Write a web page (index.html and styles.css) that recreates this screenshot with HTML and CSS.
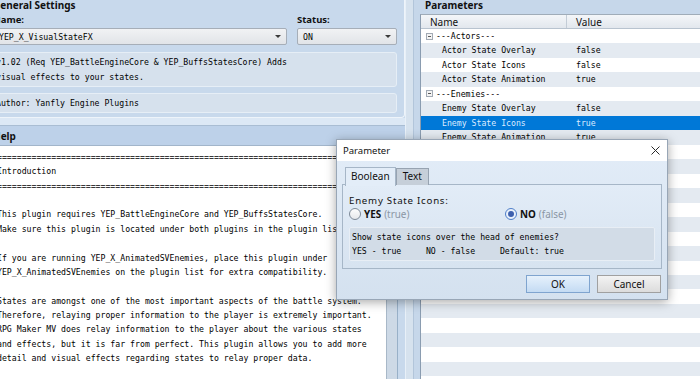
FILE: index.html
```html
<!DOCTYPE html>
<html lang="en">
<head>
    <meta charset="UTF-8">
    <meta name="viewport" content="width=device-width, initial-scale=1.0">
    <title>Plugin Manager</title>
    <link rel="stylesheet" href="styles.css">
</head>
<body>
    <div class="app">
        <div class="left">
            <section class="general">
                <h2 class="group-title">General Settings</h2>
                <div class="field-row">
                    <div class="field name-field">
                        <label>Name:</label>
                        <div class="select"><span>YEP_X_VisualStateFX</span><i class="arrow"></i></div>
                    </div>
                    <div class="field status-field">
                        <label>Status:</label>
                        <div class="select"><span>ON</span><i class="arrow"></i></div>
                    </div>
                </div>
                <div class="info-box desc">v1.02 (Req YEP_BattleEngineCore &amp; YEP_BuffsStatesCore) Adds<br>visual effects to your states.</div>
                <div class="info-box author">Author: Yanfly Engine Plugins</div>
            </section>
            <div class="hsplit"></div>
            <section class="help">
                <h2 class="help-title">Help</h2>
                <div class="help-body">
<pre class="help-text">================================================================================
Introduction
================================================================================

This plugin requires YEP_BattleEngineCore and YEP_BuffsStatesCore.
Make sure this plugin is located under both plugins in the plugin list.

If you are running YEP_X_AnimatedSVEnemies, place this plugin under
YEP_X_AnimatedSVEnemies on the plugin list for extra compatibility.

States are amongst one of the most important aspects of the battle system.
Therefore, relaying proper information to the player is extremely important.
RPG Maker MV does relay information to the player about the various states
and effects, but it is far from perfect. This plugin allows you to add more
detail and visual effects regarding states to relay proper data.</pre>
                    <div class="scroll-track"></div>
                </div>
            </section>
        </div>

        <div class="vsplit"></div>

        <div class="right">
            <h2 class="group-title params-title">Parameters</h2>
            <div class="param-table">
                <div class="param-head">
                    <div class="col-name">Name</div>
                    <div class="col-value">Value</div>
                </div>
                <div class="param-row">
                    <div class="col-name group"><i class="collapse"></i>---Actors---</div>
                    <div class="col-value"></div>
                </div>
                <div class="param-row alt">
                    <div class="col-name child">Actor State Overlay</div>
                    <div class="col-value">false</div>
                </div>
                <div class="param-row">
                    <div class="col-name child">Actor State Icons</div>
                    <div class="col-value">false</div>
                </div>
                <div class="param-row alt">
                    <div class="col-name child">Actor State Animation</div>
                    <div class="col-value">true</div>
                </div>
                <div class="param-row">
                    <div class="col-name group"><i class="collapse"></i>---Enemies---</div>
                    <div class="col-value"></div>
                </div>
                <div class="param-row alt">
                    <div class="col-name child">Enemy State Overlay</div>
                    <div class="col-value">false</div>
                </div>
                <div class="param-row selected">
                    <div class="col-name child">Enemy State Icons</div>
                    <div class="col-value">true</div>
                </div>
                <div class="param-row alt">
                    <div class="col-name child">Enemy State Animation</div>
                    <div class="col-value">true</div>
                </div>
                <div class="param-fill"></div>
            </div>
        </div>
    </div>

    <!-- dialogo de edicao do parametro -->
    <div class="dialog">
        <div class="dialog-title">
            <span>Parameter</span>
            <svg class="close" width="9" height="9" viewBox="0 0 9 9"><path d="M0.5 0.5L8.5 8.5M8.5 0.5L0.5 8.5" stroke="#2a2a2a" stroke-width="1"/></svg>
        </div>
        <div class="dialog-body">
            <div class="tabs">
                <div class="tab active">Boolean</div>
                <div class="tab">Text</div>
            </div>
            <div class="tab-panel">
                <div class="param-label">Enemy State Icons:</div>
                <div class="radios">
                    <div class="radio"><i class="dot"></i><b>YES</b> <span class="hint">(true)</span></div>
                    <div class="radio"><i class="dot checked"></i><b>NO</b> <span class="hint">(false)</span></div>
                </div>
                <pre class="param-desc">Show state icons over the head of enemies?
YES - true     NO - false     Default: true</pre>
            </div>
            <div class="buttons">
                <div class="btn ok">OK</div>
                <div class="btn">Cancel</div>
            </div>
        </div>
    </div>
</body>
</html>
```

FILE: styles.css
```css
body {
    margin: 0;
    width: 700px;
    height: 379px;
    overflow: hidden;
    position: relative;
    font-family: "Noto Sans", "DejaVu Sans", sans-serif;
    font-size: 9.5px;
    color: #111;
    background-color: #c8d9ec;
}
.app {
    display: flex;
    height: 379px;
    margin-left: -10px;
}
.left {
    width: 415px;
    flex-shrink: 0;
    display: flex;
    flex-direction: column;
}
.group-title {
    margin: 0;
    font-size: 10px;
    font-weight: bold;
    line-height: 10px;
    height: 9px;
}
.general {
    padding: 0 7px 4px 3px;
    border-right: 1px solid #eef4fa;
    border-bottom: 1px solid #eef4fa;
    border-bottom-right-radius: 4px;
}
.field-row {
    display: flex;
    gap: 10px;
    margin-top: 5px;
}
.field label {
    display: block;
    font-weight: bold;
    line-height: 12px;
}
.name-field {
    width: 294px;
}
.status-field {
    flex: 1;
}
.select {
    margin-top: 2px;
    height: 17px;
    box-sizing: border-box;
    border: 1px solid #a6aeb8;
    border-radius: 2px;
    background: linear-gradient(#f1f2f4, #e1e4e8);
    display: flex;
    align-items: center;
    justify-content: space-between;
    padding: 0 5px 0 5px;
    font-family: "DejaVu Sans Mono", monospace;
    font-size: 8.2px;
    color: #000;
}
.arrow {
    width: 0;
    height: 0;
    border-left: 3px solid transparent;
    border-right: 3px solid transparent;
    border-top: 3px solid #3a3a3a;
}
.info-box {
    box-sizing: border-box;
    border: 1px solid #e6eef6;
    border-radius: 3px;
    background-color: #d6e1ed;
    font-family: "DejaVu Sans Mono", monospace;
    font-size: 8.2px;
    color: #000;
    padding: 2px 2px;
}
.desc {
    margin-top: 7px;
    line-height: 14.5px;
}
.author {
    margin-top: 6px;
    padding-top: 0;
    padding-bottom: 0;
    line-height: 18px;
}
.hsplit {
    height: 7px;
    background-color: #dce8f5;
}
.help {
    flex: 1;
    min-height: 0;
    display: flex;
    flex-direction: column;
    border-top: 1px solid #a9bdd3;
}
.help-title {
    margin: 0;
    height: 19px;
    line-height: 20px;
    padding-left: 3px;
    font-size: 10px;
    font-weight: bold;
    background-color: #bdd1e9;
    border-bottom: 1px solid #a2b5ca;
}
.help-body {
    flex: 1;
    display: flex;
    min-height: 0;
}
.help-text {
    margin: 0;
    width: 389px;
    flex-shrink: 0;
    padding: 4px 0 0 7px;
    background-color: #fff;
    border-right: 1px solid #a8b8c8;
    overflow: hidden;
    font-family: "DejaVu Sans Mono", monospace;
    font-size: 8.2px;
    line-height: 14.36px;
    color: #000;
}
.scroll-track {
    width: 10px;
    background-color: #cdd9e6;
    border-right: 1px solid #98b0c8;
}
.vsplit {
    width: 7px;
    flex-shrink: 0;
    background-color: #d6e2ee;
    border-left: 1px solid #e8f0f8;
    border-right: 1px solid #b2c5da;
}
.right {
    flex: 1;
    display: flex;
    flex-direction: column;
    padding-left: 6px;
    background-color: #c6d7ea;
}
.params-title {
    padding-left: 5px;
    height: 14px;
    box-sizing: border-box;
}
.param-table {
    flex: 1;
    display: flex;
    flex-direction: column;
    width: 320px;
    background-color: #fff;
    border-left: 1px solid #8a9cb0;
    border-top: 1px solid #a0acb8;
    font-family: "DejaVu Sans Mono", monospace;
    font-size: 8.2px;
    color: #000;
}
.param-head {
    display: flex;
    height: 13px;
    line-height: 14px;
    background: linear-gradient(#f4f6f9, #e2e7ed);
    border-bottom: 1px solid #b8c3cf;
    font-family: "Noto Sans", sans-serif;
    font-size: 10px;
    color: #111;
}
.param-head .col-name {
    border-right: 1px solid #c3ccd6;
    padding-left: 9px;
}
.col-name {
    width: 146px;
    box-sizing: border-box;
    flex-shrink: 0;
    display: flex;
    align-items: center;
}
.col-value {
    flex: 1;
    padding-left: 9px;
}
.param-row {
    display: flex;
    height: 14.45px;
    line-height: 14.45px;
}
.param-row.alt {
    background-color: #e4eaf1;
}
.param-row.selected {
    background-color: #0078d7;
    color: #dcebff;
}
.group {
    padding-left: 5px;
}
.child {
    padding-left: 21px;
}
.collapse {
    position: relative;
    width: 5px;
    height: 5px;
    border: 1px solid #a2aab4;
    background-color: #f4f4f4;
    margin-right: 3px;
}
.collapse::after {
    content: "";
    position: absolute;
    left: 1px;
    top: 2px;
    width: 3px;
    height: 1px;
    background-color: #5a5a5a;
}
.param-fill {
    flex: 1;
    background: repeating-linear-gradient(#fff 0, #fff 14.45px, #e4eaf1 14.45px, #e4eaf1 28.9px);
}

/* dialog */
.dialog {
    position: absolute;
    left: 336px;
    top: 139px;
    width: 332px;
    box-sizing: border-box;
    border: 1px solid #98a6b6;
    box-shadow: 0 2px 10px rgba(0, 0, 0, 0.35);
    background: linear-gradient(#e3edf8, #d4e1ef);
}
.dialog-title {
    height: 21px;
    background-color: #fff;
    display: flex;
    align-items: center;
    justify-content: space-between;
    padding: 0 6px 0 6px;
    font-size: 9.5px;
}
.close {
    margin-right: 1px;
}
.dialog-body {
    padding: 6px 5px 6px 5px;
}
.tabs {
    display: flex;
    margin-left: 3px;
    height: 18px;
    position: relative;
    z-index: 1;
}
.tab {
    box-sizing: border-box;
    height: 17px;
    margin-top: 1px;
    padding: 0 6px;
    line-height: 15px;
    border: 1px solid #97a3b1;
    border-bottom: none;
    background-color: #c6cfd9;
    font-size: 10px;
}
.tab.active {
    height: 19px;
    margin-top: 0;
    padding: 0 5px;
    line-height: 17px;
    background-color: #e3edf8;
    border-color: #a6b6c7;
}
.tab-panel {
    margin-top: -1px;
    border: 1px solid #a6b6c7;
    background: linear-gradient(#e2ecf7, #d7e3f0);
    padding: 9px 6px 7px 6px;
}
.param-label {
    line-height: 13px;
    font-size: 9.7px;
    letter-spacing: 0.75px;
}
.radios {
    display: grid;
    grid-template-columns: 156px 1fr;
    height: 14px;
    align-items: center;
    font-size: 9.9px;
}
.radio {
    display: flex;
    align-items: center;
    gap: 3px;
}
.radio b {
    font-weight: bold;
}
.hint {
    color: #8a96a4;
}
.dot {
    position: relative;
    box-sizing: border-box;
    width: 12px;
    height: 12px;
    border-radius: 50%;
    border: 1px solid #7d8997;
    background: linear-gradient(#fdfdfd, #e6e8eb);
}
.dot.checked {
    border-color: #4f7fc9;
    background: #e9f1fb;
}
.dot.checked::after {
    content: "";
    position: absolute;
    left: 2px;
    top: 2px;
    width: 6px;
    height: 6px;
    border-radius: 50%;
    background-color: #3d60ae;
}
.param-desc {
    margin: 6px 0 0 0;
    border: 1px solid #e8eef5;
    border-radius: 2px;
    background-color: #d2dce7;
    padding: 2px 2px;
    font-family: "DejaVu Sans Mono", monospace;
    font-size: 8.2px;
    line-height: 14px;
    color: #000;
}
.buttons {
    display: flex;
    justify-content: flex-end;
    gap: 7px;
    margin-top: 6px;
    padding-right: 1px;
}
.btn {
    width: 64px;
    height: 18px;
    box-sizing: border-box;
    border: 1px solid #a0a0a0;
    background: linear-gradient(#f3f3f3, #dcdcdc);
    text-align: center;
    line-height: 16px;
    font-size: 10px;
}
.btn.ok {
    border-color: #7fa4cf;
    background: linear-gradient(#e6f1fc, #c4dbf3);
}
```
